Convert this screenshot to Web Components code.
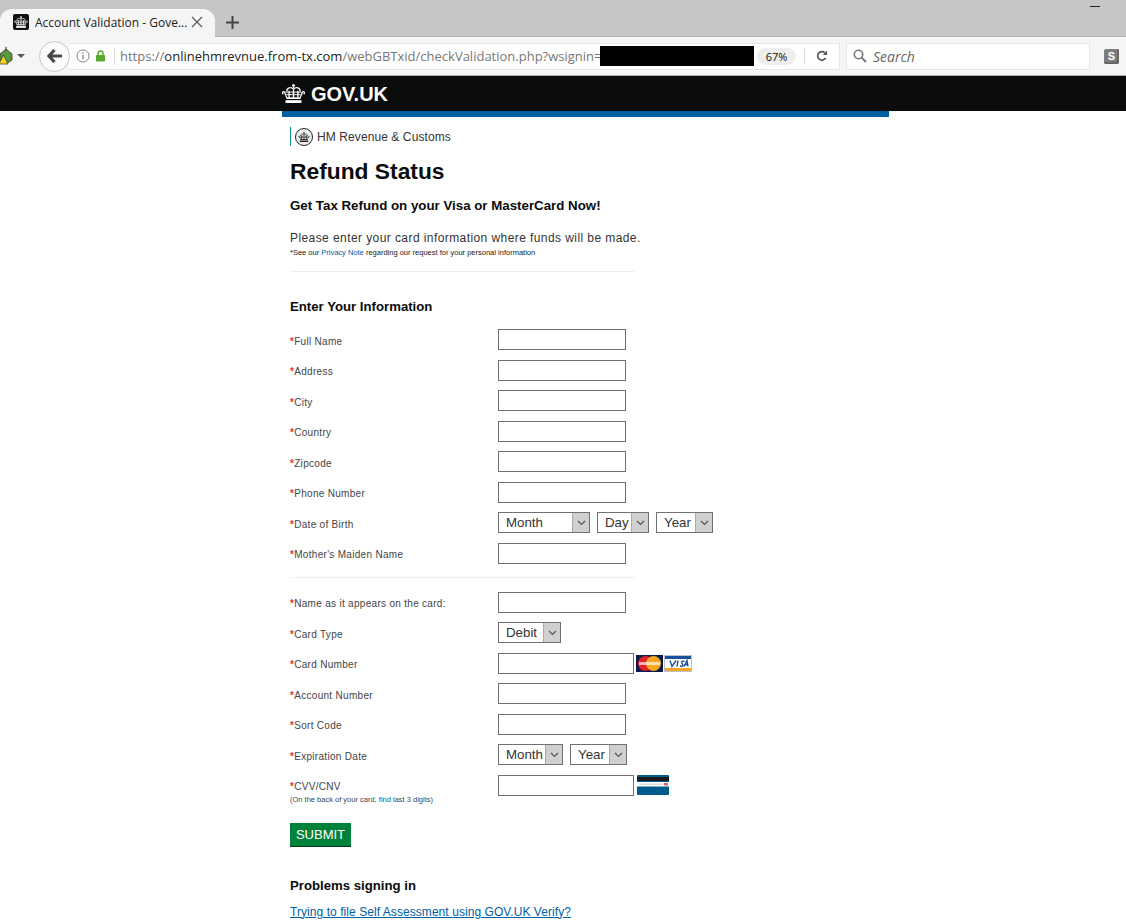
<!DOCTYPE html>
<html lang="en">
<head>
<meta charset="utf-8">
<title>Account Validation - Government Gateway</title>
<style>
html, body { margin: 0; padding: 0; background: #fff; height: 923px; overflow: hidden; }
body { font-family: "Liberation Sans", Arial, sans-serif; }
</style>
</head>
<body>
<browser-chrome></browser-chrome>
<gov-header></gov-header>
<page-content>
    <hmrc-brand slot="brand"></hmrc-brand>
    <form-row slot="first" label="Full Name"><text-field></text-field></form-row>
    <form-row slot="first" label="Address"><text-field></text-field></form-row>
    <form-row slot="first" label="City"><text-field></text-field></form-row>
    <form-row slot="first" label="Country"><text-field></text-field></form-row>
    <form-row slot="first" label="Zipcode"><text-field></text-field></form-row>
    <form-row slot="first" label="Phone Number"><text-field></text-field></form-row>
    <form-row slot="first" label="Date of Birth">
        <fake-select texto="Month" ancho="92"></fake-select>
        <fake-select texto="Day" ancho="52"></fake-select>
        <fake-select texto="Year" ancho="57"></fake-select>
    </form-row>
    <form-row slot="first" label="Mother's Maiden Name"><text-field></text-field></form-row>
    <form-row slot="second" label="Name as it appears on the card:"><text-field></text-field></form-row>
    <form-row slot="second" label="Card Type"><fake-select texto="Debit" ancho="63"></fake-select></form-row>
    <form-row slot="second" label="Card Number"><text-field ancho="136"></text-field><card-logos></card-logos></form-row>
    <form-row slot="second" label="Account Number"><text-field></text-field></form-row>
    <form-row slot="second" label="Sort Code"><text-field></text-field></form-row>
    <form-row slot="second" label="Expiration Date">
        <fake-select texto="Month" ancho="65"></fake-select>
        <fake-select texto="Year" ancho="57"></fake-select>
    </form-row>
    <form-row slot="second" label="CVV/CNV" nota="(On the back of your card, find last 3 digits)"><text-field ancho="136"></text-field><cvv-logo></cvv-logo></form-row>
</page-content>

<script>
// corona de GOV.UK, se pinta con currentColor, viewBox 0 0 24 20
const CROWN = `
    <path d="M12 0v4.4M10.3 1.6h3.4" stroke="currentColor" stroke-width="1.4" fill="none"/>
    <path d="M12 5.4C9.6 3 4.6 3.4 5 8M12 5.4C14.4 3 19.4 3.4 19 8" stroke="currentColor" stroke-width="1.3" fill="none"/>
    <path d="M5 14.6L2.6 8.6C1 7 -.4 9.6 1.4 10.8M19 14.6l2.4-6C23 7 24.4 9.6 22.6 10.8" stroke="currentColor" stroke-width="1.3" fill="none"/>
    <path d="M3.6 8.6h16.8M4.4 11.2h15.2" stroke="currentColor" stroke-width="1"/>
    <path d="M7.4 7v7.6M12 5.6v9M16.6 7v7.6" stroke="currentColor" stroke-width="1.5"/>
    <rect x="4.6" y="14" width="14.8" height="1.8" fill="currentColor"/>
    <rect x="3.6" y="17" width="16.8" height="3" fill="currentColor"/>
`;

class BrowserChrome extends HTMLElement {
    constructor() {
        super();
        this.shadow = this.attachShadow({mode: 'open'});
    }
    connectedCallback() {
        this.shadow.innerHTML = `
            <style>
                :host { display: block; font-family: "Open Sans", sans-serif; }
                .tabs { height: 37px; background: #c6c6c6; display: flex; align-items: flex-end; position: relative; box-sizing: border-box; border-bottom: 1px solid #b4b4b4; }
                .tab { width: 215px; height: 28px; margin-bottom: -1px; background: #f5f5f5; border-radius: 12px 12px 0 0; display: flex; align-items: center; padding: 0 0 2px 13px; box-sizing: border-box; gap: 6px; font-size: 12px; color: #222; }
                .fav { width: 16px; height: 16px; background: #111; border-radius: 2px; color: #fff; display: flex; align-items: center; justify-content: center; flex: none; }
                .titulo { width: 150px; white-space: nowrap; }
                .cerrar { margin-left: 0; flex: none; }
                .mas { margin: 0 0 7px 11px; }
                .min { position: absolute; right: 26px; top: 6px; width: 10px; height: 1px; background: #222; }
                .bar { height: 38px; background: #f5f5f5; border-bottom: 1px solid #a9a9a9; display: flex; align-items: center; }
                .ext { margin-left: -2px; flex: none; }
                .drop { width: 0; height: 0; border: 4px solid transparent; border-top: 4px solid #555; margin: 4px 0 0 3px; flex: none; }
                .back { width: 31px; height: 31px; border: 1px solid #c8c8c8; border-radius: 50%; background: #fbfbfb; margin-left: 14px; box-sizing: border-box; display: flex; align-items: center; justify-content: center; flex: none; position: relative; z-index: 1; }
                .url { width: 771px; height: 27px; margin-left: -1px; background: #fff; border: 1px solid #e6e6e6; border-left: none; box-sizing: border-box; display: flex; align-items: center; flex: none; }
                .url .info { margin-left: 7px; flex: none; }
                .url .lock { margin-left: 5px; flex: none; }
                .sep { width: 1px; height: 18px; background: #ddd; margin-left: 8px; flex: none; }
                .dir { font-size: 13px; color: #777; margin-left: 5px; white-space: nowrap; width: 480px; flex: none; }
                .dir b { font-weight: 400; color: #222; }
                .tapa { width: 154px; height: 20px; background: #000; flex: none; }
                .zoom { font-size: 11px; color: #111; background: #eee; border-radius: 9px; width: 39px; height: 17px; line-height: 17px; text-align: center; margin-left: 3px; flex: none; }
                .vsep { width: 1px; height: 16px; background: #ddd; margin-left: 8px; flex: none; }
                .reload { margin-left: 11px; flex: none; }
                .buscar { width: 244px; height: 27px; margin-left: 6px; background: #fff; border: 1px solid #e6e6e6; box-sizing: border-box; display: flex; align-items: center; padding-left: 6px; gap: 6px; font-size: 14px; font-style: italic; color: #666; flex: none; }
                .skype { width: 15px; height: 15px; background: #7e7e7e; border-radius: 2px; color: #fff; font: bold 11px "Liberation Sans", sans-serif; text-align: center; line-height: 15px; margin-left: 14px; flex: none; box-shadow: inset -2px -2px 0 #666; }
            </style>
            <div class="tabs">
                <div class="tab">
                    <span class="fav"><svg width="14" height="12" viewBox="0 0 24 20" fill="none">${CROWN}</svg></span>
                    <span class="titulo">Account Validation - Gove...</span>
                    <svg class="cerrar" width="12" height="12" viewBox="0 0 12 12"><path d="M1 1l10 10M11 1L1 11" stroke="#555" stroke-width="1.1"/></svg>
                </div>
                <svg class="mas" width="13" height="13" viewBox="0 0 13 13"><path d="M6.5 0v13M0 6.5h13" stroke="#444" stroke-width="2"/></svg>
                <span class="min"></span>
            </div>
            <div class="bar">
                <svg class="ext" width="16" height="20" viewBox="0 0 16 20">
                    <path d="M8 3l6 5v6l-6 4-6-4V8z" fill="#5b9a3c" stroke="#333" stroke-width=".8"/>
                    <path d="M8 .8v4" stroke="#333" stroke-width="1"/>
                    <path d="M1 18l4.5-9 4.5 9z" fill="#f3d21f" stroke="#333" stroke-width=".7"/>
                </svg>
                <span class="drop"></span>
                <span class="back"><svg width="15" height="14" viewBox="0 0 15 14"><path d="M7.5 1L2 7l5.5 6M3 7h12" fill="none" stroke="#4a4a4a" stroke-width="3.2"/></svg></span>
                <div class="url">
                    <svg class="info" width="14" height="14" viewBox="0 0 15 15"><circle cx="7.5" cy="7.5" r="6.5" fill="none" stroke="#777"/><path d="M7.5 6.5v4.5M7.5 3.6v1.6" stroke="#777" stroke-width="1.3"/></svg>
                    <svg class="lock" width="11" height="12" viewBox="0 0 12 13"><rect x="1" y="5.5" width="10" height="7" rx="1" fill="#5aa832"/><path d="M3.3 6V3.8a2.7 2.7 0 0 1 5.4 0V6" fill="none" stroke="#5aa832" stroke-width="1.7"/></svg>
                    <span class="sep"></span>
                    <span class="dir">https://<b>onlinehmrevnue.from-tx.com</b>/webGBTxid/checkValidation.php?wsignin=</span>
                    <span class="tapa"></span>
                    <span class="zoom">67%</span>
                    <span class="vsep"></span>
                    <svg class="reload" width="12" height="12" viewBox="0 0 13 13"><path d="M10.5 8.5A4.6 4.6 0 1 1 9.6 3" fill="none" stroke="#555" stroke-width="1.8"/><path d="M12 .6v4.8H7.4z" fill="#555"/></svg>
                </div>
                <div class="buscar">
                    <svg width="14" height="14" viewBox="0 0 14 14"><circle cx="5.5" cy="5.5" r="4.2" fill="none" stroke="#777" stroke-width="1.6"/><path d="M8.6 8.6l4.4 4.4" stroke="#777" stroke-width="2"/></svg>
                    <span>Search</span>
                </div>
                <span class="skype">S</span>
            </div>
        `;
    }
}
customElements.define('browser-chrome', BrowserChrome);

class GovHeader extends HTMLElement {
    constructor() {
        super();
        this.shadow = this.attachShadow({mode: 'open'});
    }
    connectedCallback() {
        this.shadow.innerHTML = `
            <style>
                :host { display: block; background: linear-gradient(#0b0c0c 35px, transparent 35px); height: 41px; }
                .ancho { width: 607px; height: 41px; margin-left: 282px; padding-top: 2px; box-sizing: border-box; border-bottom: 6px solid #005ea5; display: flex; align-items: center; gap: 6px; color: #fff; }
                span { font: bold 20px "Liberation Sans", sans-serif; }
                svg { margin-top: -2px; }
            </style>
            <div class="ancho">
                <svg width="23" height="19" viewBox="0 0 24 20" fill="none">${CROWN}</svg>
                <span>GOV.UK</span>
            </div>
        `;
    }
}
customElements.define('gov-header', GovHeader);

class HmrcBrand extends HTMLElement {
    constructor() {
        super();
        this.shadow = this.attachShadow({mode: 'open'});
    }
    connectedCallback() {
        this.shadow.innerHTML = `
            <style>
                :host { display: flex; align-items: center; height: 19px; border-left: 1px solid #12937f; padding-left: 4px; gap: 4px; font-size: 12px; letter-spacing: .09px; color: #333; }
                .circulo { width: 18px; height: 18px; border: 1.5px solid #222; box-sizing: border-box; border-radius: 50%; display: flex; align-items: center; justify-content: center; color: #222; background: #eee; }
            </style>
            <span class="circulo"><svg width="12" height="10" viewBox="0 0 24 20" fill="none">${CROWN}</svg></span>
            <span>HM Revenue &amp; Customs</span>
        `;
    }
}
customElements.define('hmrc-brand', HmrcBrand);

class TextField extends HTMLElement {
    constructor() {
        super();
        this.shadow = this.attachShadow({mode: 'open'});
    }
    connectedCallback() {
        const ancho = this.getAttribute('ancho') || '128';
        this.shadow.innerHTML = `
            <style>
                :host { display: block; width: ${ancho}px; height: 21px; border: 1px solid #707070; box-sizing: border-box; background: #fff; }
            </style>
        `;
    }
}
customElements.define('text-field', TextField);

class FakeSelect extends HTMLElement {
    constructor() {
        super();
        this.shadow = this.attachShadow({mode: 'open'});
    }
    connectedCallback() {
        const texto = this.getAttribute('texto') || '';
        const ancho = this.getAttribute('ancho') || '60';
        this.shadow.innerHTML = `
            <style>
                :host { display: flex; width: ${ancho}px; height: 21px; border: 1px solid #707070; box-sizing: border-box; background: #fff; font-size: 13.3px; color: #333; }
                .t { flex: 1; padding-left: 7px; line-height: 19px; white-space: nowrap; }
                .b { width: 17px; background: #d0d0d0; border-left: 1px solid #aaa; display: flex; align-items: center; justify-content: center; box-sizing: border-box; flex: none; }
            </style>
            <span class="t">${texto}</span>
            <span class="b"><svg width="9" height="6" viewBox="0 0 9 6"><path d="M1 1l3.5 3.5L8 1" fill="none" stroke="#555" stroke-width="1.2"/></svg></span>
        `;
    }
}
customElements.define('fake-select', FakeSelect);

class CardLogos extends HTMLElement {
    constructor() {
        super();
        this.shadow = this.attachShadow({mode: 'open'});
    }
    connectedCallback() {
        this.shadow.innerHTML = `
            <style>
                :host { display: flex; gap: 1px; margin: 2px 0 0 -5px; }
            </style>
            <svg width="27" height="17" viewBox="0 0 27 17">
                <rect width="27" height="17" fill="#0b1a4a"/>
                <circle cx="9.5" cy="8.5" r="7.5" fill="#e2202c"/>
                <circle cx="17.5" cy="8.5" r="7.5" fill="#f7a823"/>
                <rect x="3" y="7" width="21" height="3" fill="#fff" opacity=".65"/>
            </svg>
            <svg width="28" height="17" viewBox="0 0 28 17">
                <rect width="28" height="17" fill="#b9c3cf"/>
                <rect x="1" y="1" width="26" height="15" fill="#fff"/>
                <rect x="1" y="1" width="26" height="3" fill="#1a4f9c"/>
                <rect x="1" y="13" width="26" height="3" fill="#f5a623"/>
                <path d="M6 5.5l2 6 4-6M13 11.5l1-6M16 10.8c2 1 3.6.2 2.6-1.6-1-1.4-1.6-2 0-3l2 .2M20 11.5l3-6 1 6M21 9.5h3" fill="none" stroke="#1a4f9c" stroke-width="1.4"/>
            </svg>
        `;
    }
}
customElements.define('card-logos', CardLogos);

class CvvLogo extends HTMLElement {
    constructor() {
        super();
        this.shadow = this.attachShadow({mode: 'open'});
    }
    connectedCallback() {
        this.shadow.innerHTML = `
            <style>
                :host { display: block; margin-left: -4px; height: 20px; }
            </style>
            <svg width="32" height="20" viewBox="0 0 32 20">
                <rect width="32" height="20" rx="1" fill="#005a8c"/>
                <rect y="2" width="32" height="4" fill="#1a1a1a"/>
                <rect y="7" width="32" height="4.5" fill="#fff"/>
                <rect x="2" y="8.6" width="24" height="1" fill="#c9c9c9"/>
                <rect x="27" y="8" width="4" height="2.5" fill="#d66"/>
            </svg>
        `;
    }
}
customElements.define('cvv-logo', CvvLogo);

class FormRow extends HTMLElement {
    constructor() {
        super();
        this.shadow = this.attachShadow({mode: 'open'});
    }
    connectedCallback() {
        const label = this.getAttribute('label') || '';
        const nota = this.getAttribute('nota');
        this.shadow.innerHTML = `
            <style>
                :host { display: grid; grid-template-columns: 208px auto; height: 21px; }
                .etiqueta { font-size: 10px; letter-spacing: .3px; color: #444; padding-top: 6.5px; white-space: nowrap; line-height: 12px; }
                .etiqueta i { font-style: normal; color: #e8352c; font-weight: bold; }
                .nota { font-size: 7.5px; letter-spacing: 0; line-height: 9px; margin-top: 2px; color: #444; }
                .nota span { color: #005ea5; }
                .campo { display: flex; gap: 7px; align-items: flex-start; }
            </style>
            <div class="etiqueta">
                <i>*</i>${label}
                ${nota ? `<div class="nota">${nota.replace('find', '<span>find</span>')}</div>` : ''}
            </div>
            <div class="campo"><slot></slot></div>
        `;
    }
}
customElements.define('form-row', FormRow);

class PageContent extends HTMLElement {
    constructor() {
        super();
        this.shadow = this.attachShadow({mode: 'open'});
    }
    connectedCallback() {
        this.shadow.innerHTML = `
            <style>
                :host { display: block; width: 599px; margin-left: 290px; padding-top: 10px; }
                h1 { font-size: 22.8px; line-height: 28px; font-weight: bold; color: #0b0c0c; margin: 11px 0 0; }
                h2 { font-size: 13.3px; line-height: 16px; font-weight: bold; color: #0b0c0c; margin: 13px 0 0; }
                h3 { font-size: 13.2px; line-height: 16px; font-weight: bold; color: #0b0c0c; margin: 27px 0 0; }
                .intro { font-size: 12px; line-height: 14px; color: #333; margin: 17px 0 0; letter-spacing: .42px; }
                .aviso { font-size: 7.5px; line-height: 10px; color: #222; margin: 3px 0 0; }
                a { color: #005ea5; }
                .aviso a { text-decoration: none; }
                hr { border: 0; height: 1px; background: #eee; width: 344px; margin: 0; }
                .h1r { margin-top: 13px; }
                .filas { display: grid; row-gap: 9.5px; margin-top: 14px; }
                .h2r { margin-top: 13px; margin-bottom: 14px; }
                .segunda { margin-top: 0; }
                .enviar { display: block; width: 61px; height: 23px; background: #00823b; color: #fff; font-size: 13px; line-height: 24px; text-align: center; text-decoration: none; margin-top: 27px; box-shadow: 0 1px 0 #003618; }
                .problemas { margin-top: 32px; }
                .enlace { font-size: 12px; line-height: 14px; margin: 11px 0 0; letter-spacing: .06px; }
            </style>
            <slot name="brand"></slot>
            <h1>Refund Status</h1>
            <h2>Get Tax Refund on your Visa or MasterCard Now!</h2>
            <p class="intro">Please enter your card information where funds will be made.</p>
            <p class="aviso">*See our <a href="#">Privacy Note</a> regarding our request for your personal information</p>
            <hr class="h1r">
            <h3>Enter Your Information</h3>
            <div class="filas"><slot name="first"></slot></div>
            <hr class="h2r">
            <div class="filas segunda"><slot name="second"></slot></div>
            <a class="enviar">SUBMIT</a>
            <h3 class="problemas">Problems signing in</h3>
            <p class="enlace"><a href="#">Trying to file Self Assessment using GOV.UK Verify?</a></p>
        `;
    }
}
customElements.define('page-content', PageContent);
</script>
</body>
</html>
